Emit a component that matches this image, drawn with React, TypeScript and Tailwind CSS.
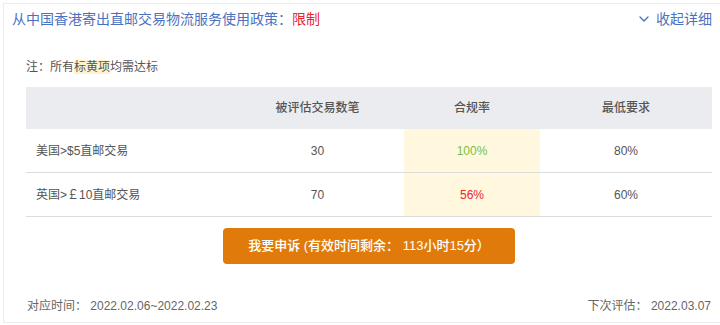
import { ChevronDown } from "lucide-react";

const rows = [
  { name: "美国>$5直邮交易", count: "30", rate: "100%", ok: true, min: "80%" },
  { name: "英国>￡10直邮交易", count: "70", rate: "56%", ok: false, min: "60%" },
];

export default function App() {
  return (
    <div
      className="w-[720px] h-[325px] bg-white pt-[3px] pl-[3px]"
      style={{ fontFamily: '"Liberation Sans", "Noto Sans CJK SC", sans-serif' }}
    >
      <div className="h-[320px] border-l border-t border-b border-[#ececec] flex flex-col">
        {/* Header */}
        <div className="flex items-center justify-between h-[27px] pl-[8px] pr-[8px] pt-[2px]">
          <p className="text-[14px] text-[#4a72c0] leading-none">
            从中国香港寄出直邮交易物流服务使用政策：<span className="text-[#e8262e]">限制</span>
          </p>
          <button className="flex items-center gap-[4px] text-[14px] text-[#4a72c0] leading-none">
            <ChevronDown size={16} strokeWidth={2} />
            收起详细
          </button>
        </div>

        {/* Note */}
        <p className="mt-[30px] ml-[22px] text-[12px] text-[#555] leading-none">
          注：所有<span className="bg-[#fff2cf]">标黄项</span>均需达标
        </p>

        {/* Table */}
        <div className="mt-[14px] ml-[22px] w-[686px] text-[12px]">
          <div className="grid grid-cols-[205px_173px_136px_172px] h-[42px] bg-[#ebecef] items-center text-[#555] font-medium">
            <div />
            <div className="text-center">被评估交易数笔</div>
            <div className="text-center">合规率</div>
            <div className="text-center">最低要求</div>
          </div>
          {rows.map((r) => (
            <div
              key={r.name}
              className="grid grid-cols-[205px_173px_136px_172px] h-[44px] border-b border-[#dcdcdc] text-[#555]"
            >
              <div className="flex items-center pl-[10px]">{r.name}</div>
              <div className="flex items-center justify-center">{r.count}</div>
              <div
                className={`flex items-center justify-center bg-[#fff8de] ${
                  r.ok ? "text-[#7bc043]" : "text-[#e8262e]"
                }`}
              >
                {r.rate}
              </div>
              <div className="flex items-center justify-center">{r.min}</div>
            </div>
          ))}
        </div>

        {/* Appeal */}
        <div className="ml-[22px] w-[686px] flex justify-center mt-[11px]">
          <button className="w-[292px] h-[36px] rounded-[4px] bg-[#e07b0b] text-white text-[13px] font-medium">
            我要申诉 (有效时间剩余： 113小时15分）
          </button>
        </div>

        {/* Footer */}
        <div className="flex justify-between items-center mt-[33px] pl-[23px] pr-[9px] text-[12px] text-[#666]">
          <span>对应时间： 2022.02.06~2022.02.23</span>
          <span>下次评估： 2022.03.07</span>
        </div>
      </div>
    </div>
  );
}
